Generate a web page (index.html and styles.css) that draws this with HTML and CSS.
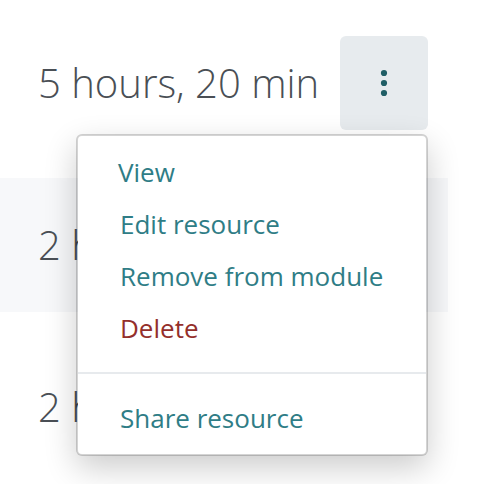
FILE: index.html
```html
<!DOCTYPE html>
<html lang="en">
<head>
<meta charset="utf-8">
<title>Resources</title>
<link rel="stylesheet" href="styles.css">
</head>
<body>
<ul class="resources">
  <li class="resource">
    <span class="duration">5 hours, 20 min</span>
    <div class="actions">
      <button class="toggle" type="button" aria-label="Resource actions" aria-expanded="true">
        <svg class="dots" viewBox="0 0 8 28" aria-hidden="true">
          <circle cx="4" cy="4" r="3.1"/>
          <circle cx="4" cy="14" r="3.1"/>
          <circle cx="4" cy="24" r="3.1"/>
        </svg>
      </button>
      <div class="menu">
        <a class="item" href="#">View</a>
        <button class="item action" type="button">Edit resource</button>
        <button class="item action" type="button">Remove from module</button>
        <button class="item action danger" type="button">Delete</button>
        <hr class="divider">
        <button class="item action" type="button">Share resource</button>
      </div>
    </div>
  </li>
  <li class="resource striped"><span class="duration">2 h</span></li>
  <li class="resource"><span class="duration">2 h</span></li>
</ul>
</body>
</html>
```
FILE: styles.css
```css
* {
  box-sizing: border-box;
}

body {
  min-height: 100vh;
  margin: 0;
  background: #fff;
  color: #4a4f55;
  font-family: "Open Sans", sans-serif;
  overflow: hidden;
}

.resources {
  display: flex;
  flex-direction: column;
  gap: 28px;
  margin: 0 48px 0 0;
  padding: 16px 0 0;
  list-style: none;
}

.resource {
  display: flex;
  align-items: center;
  justify-content: space-between;
  min-height: 134px;
  padding: 20px 20px 20px 38px;
}

.striped {
  background: #f7f8fa;
}

.duration {
  font-size: 40px;
  font-weight: 300;
  line-height: 56px;
  white-space: nowrap;
}

.actions {
  position: relative;
}

.toggle {
  display: flex;
  align-items: center;
  justify-content: center;
  width: 88px;
  height: 94px;
  padding: 0;
  border: 0;
  border-radius: 6px;
  background: #e7ebee;
  color: #205e66;
}

.dots {
  width: 8px;
  height: 28px;
  fill: currentColor;
}

.menu {
  position: absolute;
  z-index: 1;
  top: calc(100% + 4px);
  right: 0;
  width: 352px;
  padding: 10px 0;
  border: 2px solid rgba(0, 0, 0, 0.17);
  border-radius: 6px;
  background: #fff;
  background-clip: padding-box;
  box-shadow: 0 12px 32px rgba(0, 0, 0, 0.2);
}

.item {
  display: block;
  width: 100%;
  padding: 0 40px;
  color: #2f7d86;
  font-size: 26px;
  line-height: 52px;
  text-align: left;
  text-decoration: none;
  white-space: nowrap;
}

.action {
  padding: 0 42px;
  border: 0;
  background: none;
  font-family: inherit;
}

.danger {
  color: #942f2b;
}

.divider {
  height: 2px;
  margin: 18px 0;
  border: 0;
  background: #e7eaed;
}
```
